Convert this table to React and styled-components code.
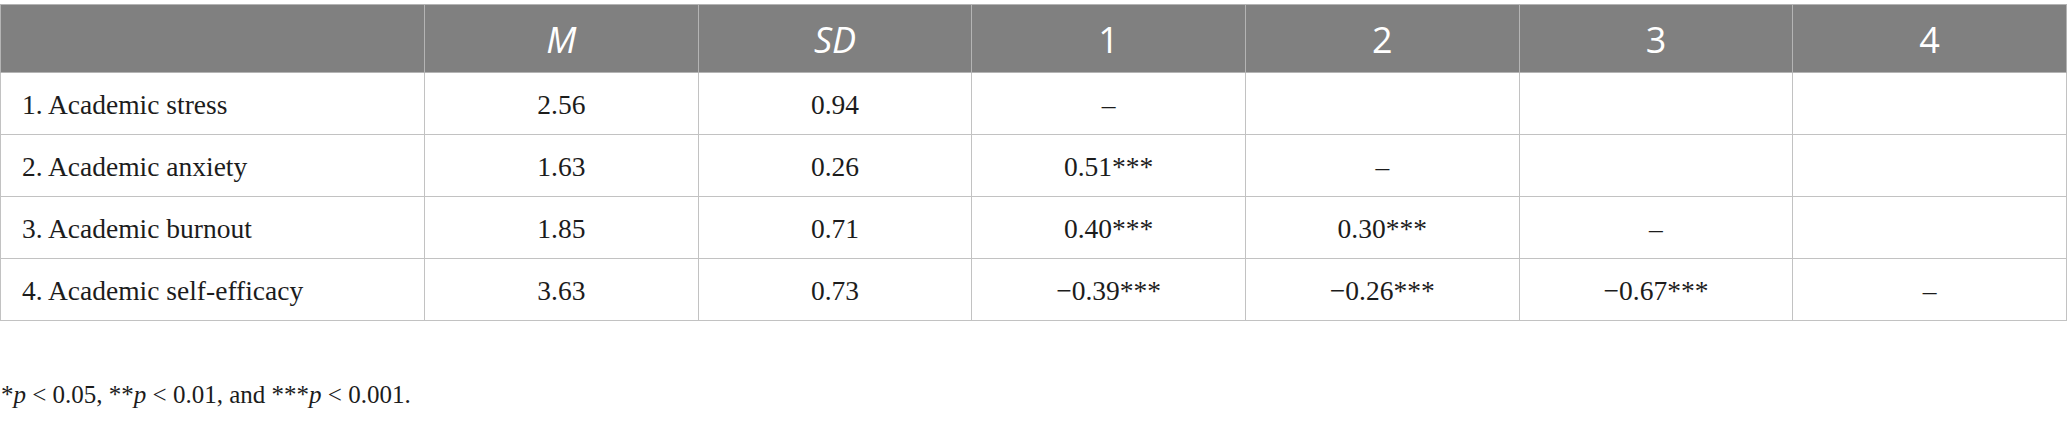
import React from 'react'
import styled, { createGlobalStyle } from 'styled-components'

const GlobalStyle = createGlobalStyle`
  html, body {
    margin: 0;
    padding: 0;
    background: #ffffff;
  }
  body {
    font-family: "Liberation Serif", "Times New Roman", serif;
    color: #1a1a1a;
  }
`

const columns = ['M', 'SD', '1', '2', '3', '4']

const rows = [
  { label: '1. Academic stress', values: ['2.56', '0.94', '–', '', '', ''] },
  { label: '2. Academic anxiety', values: ['1.63', '0.26', '0.51***', '–', '', ''] },
  { label: '3. Academic burnout', values: ['1.85', '0.71', '0.40***', '0.30***', '–', ''] },
  { label: '4. Academic self-efficacy', values: ['3.63', '0.73', '−0.39***', '−0.26***', '−0.67***', '–'] },
]

const Wrap = styled.div`
  padding-top: 4px;
`

const Table = styled.table`
  width: 100%;
  border-collapse: collapse;
  table-layout: fixed;
  border: 1px solid #c2c2c2;
`

const HeadRow = styled.tr`
  height: 68px;
  background: #808080;
`

const HeadCell = styled.th`
  border: 1px solid #b4b4b4;
  color: #ffffff;
  font-family: "Open Sans", "Noto Sans", sans-serif;
  font-size: 36px;
  font-weight: 400;
  font-style: ${p => (p.$italic ? 'italic' : 'normal')};
  line-height: 1;
  text-align: center;
  vertical-align: middle;
  padding: 2px 0 0;
`

const BodyRow = styled.tr`
  height: 62px;
`

const Cell = styled.td`
  border: 1px solid #c2c2c2;
  font-size: 27.5px;
  line-height: 1.1;
  color: #1c1c1c;
  text-align: ${p => (p.$label ? 'left' : 'center')};
  padding: ${p => (p.$label ? '4px 0 0 21px' : '4px 0 0')};
  vertical-align: middle;
  white-space: nowrap;
`

const Footnote = styled.p`
  margin: 60px 0 0 1px;
  font-size: 25px;
  color: #1c1c1c;

  i {
    font-style: italic;
  }
`

export default function App() {
  return (
    <Wrap>
      <GlobalStyle />
      <Table>
        <colgroup>
          <col style={{ width: '424px' }} />
          {columns.map(c => (
            <col key={c} />
          ))}
        </colgroup>
        <thead>
          <HeadRow>
            <HeadCell />
            {columns.map(c => (
              <HeadCell key={c} $italic={c === 'M' || c === 'SD'}>
                {c}
              </HeadCell>
            ))}
          </HeadRow>
        </thead>
        <tbody>
          {rows.map(r => (
            <BodyRow key={r.label}>
              <Cell $label>{r.label}</Cell>
              {r.values.map((v, i) => (
                <Cell key={i}>{v}</Cell>
              ))}
            </BodyRow>
          ))}
        </tbody>
      </Table>
      <Footnote>
        *<i>p</i> &lt; 0.05, **<i>p</i> &lt; 0.01, and ***<i>p</i> &lt; 0.001.
      </Footnote>
    </Wrap>
  )
}
